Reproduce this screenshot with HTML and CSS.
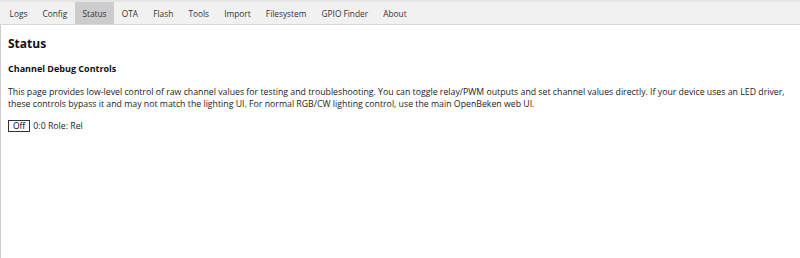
FILE: index.html
```html
<!DOCTYPE html>
<html lang="en">
<head>
    <meta charset="UTF-8">
    <meta name="viewport" content="width=device-width, initial-scale=1.0">
    <title>OpenBeken</title>
    <link rel="stylesheet" href="styles.css">
</head>
<body>
    <div class="tabs">
        <div class="tab">Logs</div>
        <div class="tab">Config</div>
        <div class="tab active">Status</div>
        <div class="tab">OTA</div>
        <div class="tab">Flash</div>
        <div class="tab">Tools</div>
        <div class="tab">Import</div>
        <div class="tab">Filesystem</div>
        <div class="tab">GPIO Finder</div>
        <div class="tab">About</div>
    </div>
    <div class="page">
        <h2>Status</h2>
        <h3>Channel Debug Controls</h3>
        <p class="info">This page provides low-level control of raw channel values for testing and troubleshooting. You can toggle relay/PWM outputs and set channel values directly. If your device uses an LED driver, these controls bypass it and may not match the lighting UI. For normal RGB/CW lighting control, use the main OpenBeken web UI.</p>
        <div class="chan">
            <button class="toggle">Off</button>
            <span>0:0 Role: Rel</span>
        </div>
    </div>
</body>
</html>
```
FILE: styles.css
```css
body{
    margin: 0;
    font-family: "Open Sans", "Noto Sans", sans-serif;
    font-size: 8.75px;
    color: #222;
    background: #fff;
    height: 100vh;
    display: flex;
    flex-direction: column;
}
.tabs{
    display: flex;
    background-color: #f1f1f1;
    border-top: 2px solid #e4e4e4;
    border-bottom: 1px solid #d6d6d6;
    height: 22px;
    padding-left: 2px;
}
.tab{
    padding: 0 7.6px;
    display: flex;
    align-items: center;
    color: #333;
    font-size: 8.3px;
}
.active{
    background-color: #cccccc;
}
.page{
    flex: 1;
    border-left: 1px solid #ccc;
    padding: 0 8px 0 7px;
}
h2{
    font-size: 12px;
    margin: 10px 0 0 0;
    color: #111;
}
h3{
    font-size: 9px;
    margin: 10px 0 0 0;
    color: #111;
}
.info{
    margin: 11px 0 0 0;
    line-height: 12px;
}
.chan{
    margin-top: 10px;
    display: flex;
    align-items: center;
    gap: 3px;
}
.toggle{
    font-family: inherit;
    font-size: 8.5px;
    background: #fff;
    border: 1px solid #333;
    border-radius: 0;
    padding: 0 4px;
    height: 12px;
    line-height: 10px;
}
```
